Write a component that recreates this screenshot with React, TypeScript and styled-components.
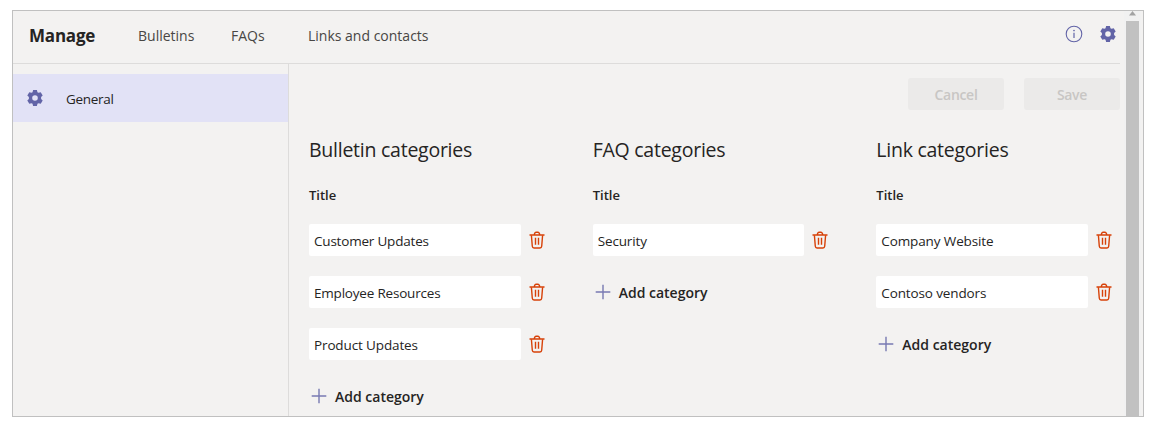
import React from "react";
import styled, { createGlobalStyle } from "styled-components";

const GlobalStyle = createGlobalStyle`
  *, *::before, *::after { box-sizing: border-box; }
  body {
    margin: 0;
    background: #fff;
    font-family: "Open Sans", "Noto Sans", sans-serif;
    color: #252423;
  }
  button { font-family: inherit; border: 0; padding: 0; background: none; }
`;

const Page = styled.div`
  height: 428px;
  padding: 10px 11px 11px 12px;
`;

const Frame = styled.div`
  display: flex;
  height: 407px;
  border: 1px solid #c0c0c0;
  background: #f3f2f1;
  overflow: hidden;
`;

const Main = styled.div`
  display: flex;
  flex-direction: column;
  width: 1107px;
`;

const Header = styled.header`
  display: flex;
  align-items: center;
  height: 53px;
  padding: 0 4px 3px 16px;
  border-bottom: 1px solid #dddcdb;
`;

const Heading = styled.h1`
  margin: 0;
  width: 109px;
  font-size: 17px;
  line-height: 24px;
  font-weight: 700;
  letter-spacing: -0.2px;
  white-space: nowrap;
`;

const Tab = styled.a<{ $width: number }>`
  width: ${(p) => p.$width}px;
  font-size: 14px;
  line-height: 20px;
  color: #484644;
  white-space: nowrap;
`;

const HeaderIcons = styled.div`
  display: flex;
  align-items: center;
  gap: 17px;
  margin-left: auto;
  padding-bottom: 3px;
`;

const Body = styled.div`
  display: flex;
  flex: 1;
`;

const Sidebar = styled.nav`
  width: 276px;
  padding-top: 10px;
  border-right: 1px solid #dddcdb;
`;

const SidebarItem = styled.div`
  display: flex;
  align-items: center;
  gap: 23px;
  height: 48px;
  padding-left: 14px;
  background: #e2e2f6;
  font-size: 13.5px;
  line-height: 18px;
`;

const SidebarLabel = styled.span`
  padding-top: 2px;
  letter-spacing: -0.3px;
`;

const Content = styled.main`
  flex: 1;
  padding: 14px 0 0 20px;
`;

const Actions = styled.div`
  display: flex;
  justify-content: flex-end;
  gap: 20px;
`;

const ActionButton = styled.button`
  width: 96px;
  height: 32px;
  border-radius: 3px;
  background: #ebeae9;
  color: #c8c6c4;
  font-size: 14px;
  line-height: 20px;
  font-weight: 600;
  letter-spacing: -0.3px;
  padding-top: 2px;
`;

const Columns = styled.div`
  display: grid;
  grid-template-columns: repeat(3, 1fr);
  column-gap: 40px;
  padding-top: 24px;
`;

const Column = styled.section`
  display: flex;
  flex-direction: column;
`;

const ColumnTitle = styled.h2`
  margin: 0;
  font-size: 19.5px;
  line-height: 32px;
  font-weight: 370;
  letter-spacing: -0.25px;
  white-space: nowrap;
`;

const FieldLabel = styled.div`
  margin: 19px 0 19px;
  font-size: 13px;
  line-height: 20px;
  font-weight: 600;
`;

const Rows = styled.div`
  display: flex;
  flex-direction: column;
  gap: 20px;
`;

const Row = styled.div`
  display: flex;
  height: 32px;
`;

const Field = styled.div<{ $spacing: number }>`
  flex: 1;
  padding: 7px 5px 0;
  border-radius: 2px;
  background: #fff;
  font-size: 13.5px;
  line-height: 20px;
  letter-spacing: ${(p) => p.$spacing}px;
  white-space: nowrap;
`;

const IconButton = styled.button`
  display: flex;
  align-items: center;
  justify-content: center;
  width: 32px;
  height: 32px;
`;

const AddButton = styled.button`
  display: flex;
  align-items: center;
  gap: 8px;
  height: 32px;
  padding-left: 2px;
  font-size: 14px;
  line-height: 20px;
  font-weight: 600;
  color: #252423;
  white-space: nowrap;
`;

const AddLabel = styled.span`
  padding-top: 2px;
`;

const Scrollbar = styled.div`
  display: flex;
  flex-direction: column;
  align-items: center;
  width: 17px;
  margin-left: 4px;
  background: #f1f1f1;
`;

const ArrowSlot = styled.div`
  display: flex;
  height: 10px;
`;

const Thumb = styled.div`
  flex: 1;
  width: 13px;
  background: #c1c1c1;
`;

const Gear = () => (
  <svg width="16" height="16" viewBox="0 0 16 16" fill="#6264a7">
    <path
      fillRule="evenodd"
      d="M6.1 0h3.8l.55 2.2 1.05.6 2.2-.65L15.7 5.5 14.1 7v2l1.6 1.5-2 3.35-2.2-.65-1.05.6L9.9 16H6.1l-.55-2.2-1.05-.6-2.2.65L.3 10.5 1.9 9V7L.3 5.5l2-3.35 2.2.65 1.05-.6zM8 5.2a2.8 2.8 0 1 0 0 5.6 2.8 2.8 0 0 0 0-5.6z"
    />
  </svg>
);

const Info = () => (
  <svg width="18" height="18" viewBox="0 0 18 18" fill="none">
    <circle cx="9" cy="9" r="7.8" stroke="#6264a7" strokeWidth="1.1" />
    <path d="M9 7.8v5.2" stroke="#6264a7" strokeWidth="1.2" />
    <circle cx="9" cy="5.5" r=".85" fill="#6264a7" />
  </svg>
);

const Trash = () => (
  <svg width="16" height="18" viewBox="0 0 16 18" fill="none" stroke="#d74108" strokeWidth="1.4">
    <path d="M.5 4h15M5.2 3.8l.5-1.5C5.9 1.5 6.4 1.2 7 1.2h2c.6 0 1.1.3 1.3 1.1l.5 1.5" />
    <path d="M2.4 4.2l.9 11.1c.1 1.1.7 1.7 1.7 1.7h6c1 0 1.6-.6 1.7-1.7l.9-11.1" />
    <path d="M6.5 6.8v7M9.5 6.8v7" />
  </svg>
);

const Plus = () => (
  <svg width="16" height="16" viewBox="0 0 16 16" stroke="#6264a7" strokeWidth="1.4" strokeOpacity=".85">
    <path d="M.7 8h14.6M8 .7v14.6" />
  </svg>
);

type Item = { name: string; spacing: number };

const columns: { title: string; items: Item[] }[] = [
  {
    title: "Bulletin categories",
    items: [
      { name: "Customer Updates", spacing: -0.2 },
      { name: "Employee Resources", spacing: -0.2 },
      { name: "Product Updates", spacing: -0.13 },
    ],
  },
  { title: "FAQ categories", items: [{ name: "Security", spacing: -0.13 }] },
  {
    title: "Link categories",
    items: [
      { name: "Company Website", spacing: -0.12 },
      { name: "Contoso vendors", spacing: -0.13 },
    ],
  },
];

export default function App() {
  return (
    <Page>
      <GlobalStyle />
      <Frame>
        <Main>
          <Header>
            <Heading>Manage</Heading>
            <Tab $width={93}>Bulletins</Tab>
            <Tab $width={77}>FAQs</Tab>
            <Tab $width={130}>Links and contacts</Tab>
            <HeaderIcons>
              <Info />
              <Gear />
            </HeaderIcons>
          </Header>
          <Body>
            <Sidebar>
              <SidebarItem>
                <Gear />
                <SidebarLabel>General</SidebarLabel>
              </SidebarItem>
            </Sidebar>
            <Content>
              <Actions>
                <ActionButton>Cancel</ActionButton>
                <ActionButton>Save</ActionButton>
              </Actions>
              <Columns>
                {columns.map((column) => (
                  <Column key={column.title}>
                    <ColumnTitle>{column.title}</ColumnTitle>
                    <FieldLabel>Title</FieldLabel>
                    <Rows>
                      {column.items.map((item) => (
                        <Row key={item.name}>
                          <Field $spacing={item.spacing}>{item.name}</Field>
                          <IconButton aria-label="Delete">
                            <Trash />
                          </IconButton>
                        </Row>
                      ))}
                      <AddButton>
                        <Plus />
                        <AddLabel>Add category</AddLabel>
                      </AddButton>
                    </Rows>
                  </Column>
                ))}
              </Columns>
            </Content>
          </Body>
        </Main>
        <Scrollbar>
          <ArrowSlot>
            <svg width="7" height="5" viewBox="0 0 7 5" fill="#a3a3a3">
              <path d="M3.5 0L7 4.5H0z" />
            </svg>
          </ArrowSlot>
          <Thumb />
        </Scrollbar>
      </Frame>
    </Page>
  );
}
